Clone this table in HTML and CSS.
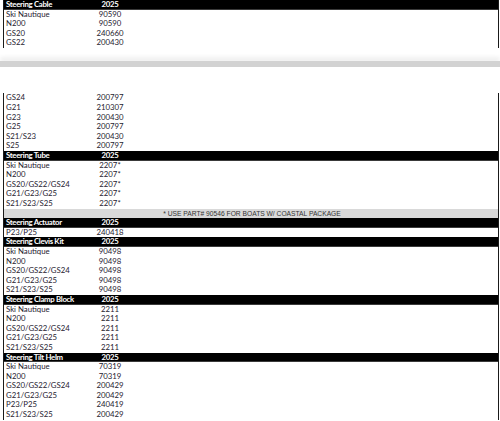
FILE: index.html
```html
<!DOCTYPE html>
<html>
<head>
<meta charset="utf-8">
<link rel="stylesheet" href="styles.css">
</head>
<body>
<div class="page">
  <div class="sheet sheet-top">
    <div class="row head"><span class="lbl">Steering Cable</span><span class="val">2025</span></div>
    <div class="row"><span class="lbl">Ski Nautique</span><span class="val">90590</span></div>
    <div class="row"><span class="lbl">N200</span><span class="val">90590</span></div>
    <div class="row"><span class="lbl">GS20</span><span class="val">240660</span></div>
    <div class="row"><span class="lbl">GS22</span><span class="val">200430</span></div>
  </div>

  <div class="pagebreak"></div>

  <div class="sheet sheet-bottom">
    <div class="row"><span class="lbl">GS24</span><span class="val">200797</span></div>
    <div class="row"><span class="lbl">G21</span><span class="val">210307</span></div>
    <div class="row"><span class="lbl">G23</span><span class="val">200430</span></div>
    <div class="row"><span class="lbl">G25</span><span class="val">200797</span></div>
    <div class="row"><span class="lbl">S21/S23</span><span class="val">200430</span></div>
    <div class="row"><span class="lbl">S25</span><span class="val">200797</span></div>

    <div class="row head"><span class="lbl">Steering Tube</span><span class="val">2025</span></div>
    <div class="row"><span class="lbl">Ski Nautique</span><span class="val">2207*</span></div>
    <div class="row"><span class="lbl">N200</span><span class="val">2207*</span></div>
    <div class="row"><span class="lbl">GS20/GS22/GS24</span><span class="val">2207*</span></div>
    <div class="row"><span class="lbl">G21/G23/G25</span><span class="val">2207*</span></div>
    <div class="row"><span class="lbl">S21/S23/S25</span><span class="val">2207*</span></div>
    <div class="row note"><span class="note-text">* USE PART# 90546 FOR BOATS W/ COASTAL PACKAGE</span></div>

    <div class="row head"><span class="lbl">Steering Actuator</span><span class="val">2025</span></div>
    <div class="row"><span class="lbl">P23/P25</span><span class="val">240418</span></div>

    <div class="row head"><span class="lbl">Steering Clevis Kit</span><span class="val">2025</span></div>
    <div class="row"><span class="lbl">Ski Nautique</span><span class="val">90498</span></div>
    <div class="row"><span class="lbl">N200</span><span class="val">90498</span></div>
    <div class="row"><span class="lbl">GS20/GS22/GS24</span><span class="val">90498</span></div>
    <div class="row"><span class="lbl">G21/G23/G25</span><span class="val">90498</span></div>
    <div class="row"><span class="lbl">S21/S23/S25</span><span class="val">90498</span></div>

    <div class="row head"><span class="lbl">Steering Clamp Block</span><span class="val">2025</span></div>
    <div class="row"><span class="lbl">Ski Nautique</span><span class="val">2211</span></div>
    <div class="row"><span class="lbl">N200</span><span class="val">2211</span></div>
    <div class="row"><span class="lbl">GS20/GS22/GS24</span><span class="val">2211</span></div>
    <div class="row"><span class="lbl">G21/G23/G25</span><span class="val">2211</span></div>
    <div class="row"><span class="lbl">S21/S23/S25</span><span class="val">2211</span></div>

    <div class="row head"><span class="lbl">Steering Tilt Helm</span><span class="val">2025</span></div>
    <div class="row"><span class="lbl">Ski Nautique</span><span class="val">70319</span></div>
    <div class="row"><span class="lbl">N200</span><span class="val">70319</span></div>
    <div class="row"><span class="lbl">GS20/GS22/GS24</span><span class="val">200429</span></div>
    <div class="row"><span class="lbl">G21/G23/G25</span><span class="val">200429</span></div>
    <div class="row"><span class="lbl">P23/P25</span><span class="val">240419</span></div>
    <div class="row"><span class="lbl">S21/S23/S25</span><span class="val">200429</span></div>
  </div>
</div>
</body>
</html>
```

FILE: styles.css
```css
html, body {
  margin: 0;
  padding: 0;
  background: #ffffff;
}

.page {
  width: 500px;
  height: 421px;
  overflow: hidden;
  display: flex;
  flex-direction: column;
  font-family: Lato, "Open Sans", sans-serif;
  font-size: 7.8px;
  color: #1f2230;
}

.sheet {
  margin-left: 3px;
  width: 496px;
  box-sizing: border-box;
  border-left: 1px solid #1a1a1a;
  border-right: 1px solid #1a1a1a;
  display: flex;
  flex-direction: column;
  flex-shrink: 0;
}

.row {
  display: grid;
  grid-template-columns: 76px 60px 1fr;
  height: 9.6px;
  line-height: 9.6px;
  white-space: nowrap;
}

.lbl {
  padding-left: 2px;
}

.val {
  text-align: center;
}

.head {
  background: #000000;
  color: #ffffff;
  font-weight: 700;
  letter-spacing: -0.3px;
  box-shadow: inset 0 -1px 0 #3a3a3a;
}

.note {
  display: flex;
  justify-content: center;
  background: #d9d9d9;
}

.note-text {
  font-family: "Liberation Sans", Arial, sans-serif;
  font-size: 6.7px;
  color: #333333;
  padding-left: 2px;
}

.pagebreak {
  flex-shrink: 0;
  height: 6px;
  margin-top: 13px;
  margin-bottom: 26.5px;
  background: #d2d2d2;
  box-shadow: 0 -4px 4px #f0f0f0;
}
```
